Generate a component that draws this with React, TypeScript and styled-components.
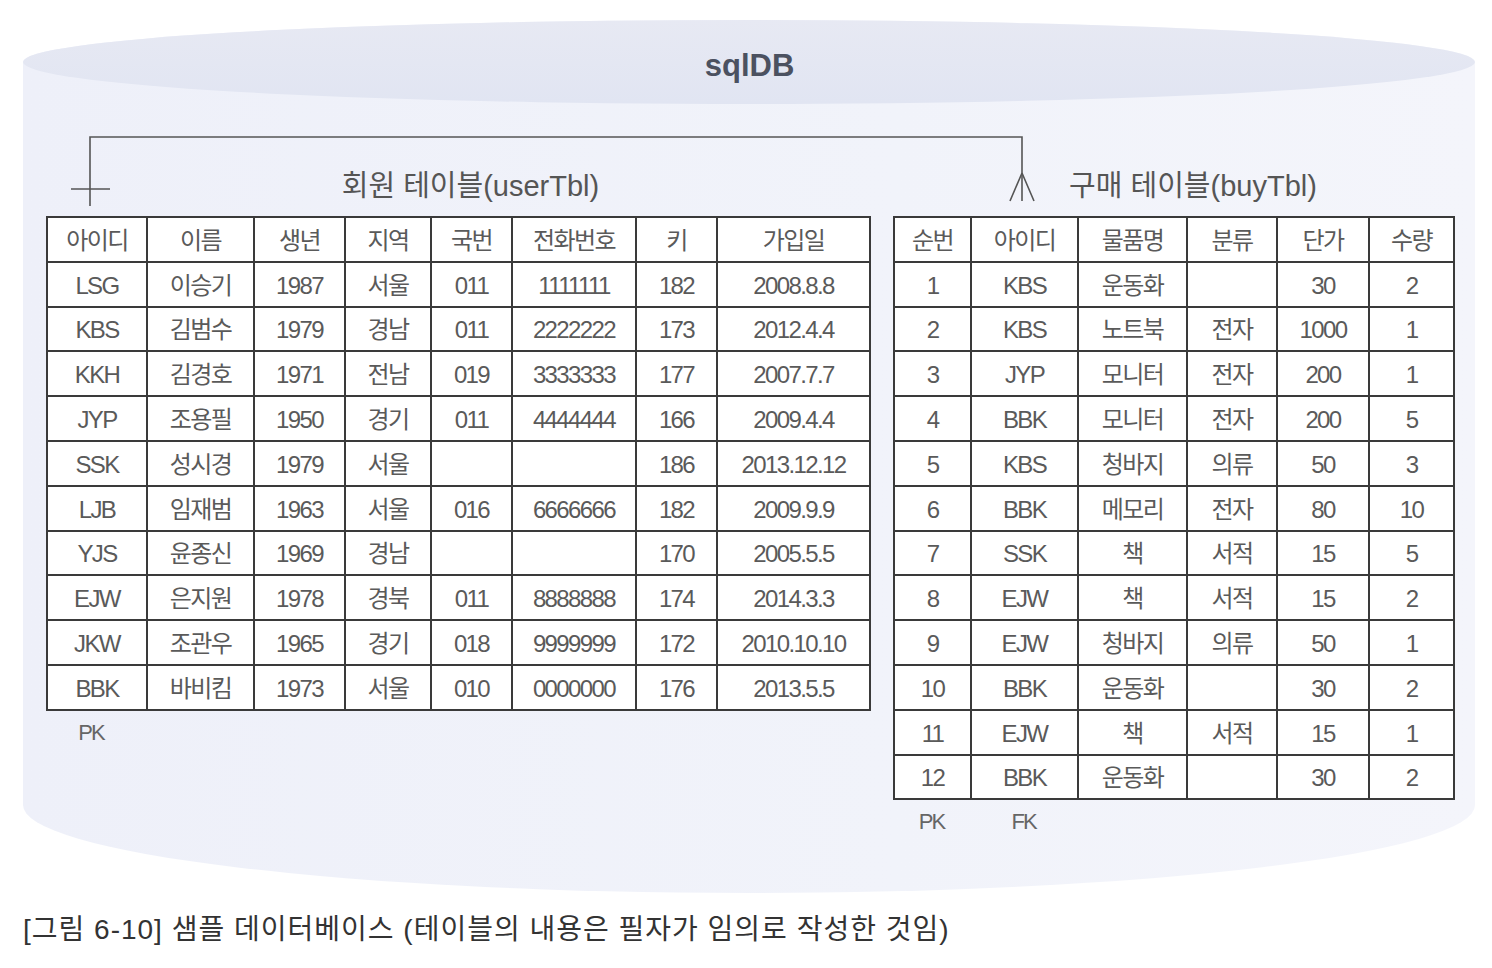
import React from 'react'
import styled, { createGlobalStyle } from 'styled-components'

const GlobalStyle = createGlobalStyle`
  body {
    margin: 0;
    background: #ffffff;
    font-family: 'Liberation Sans', 'Noto Sans CJK KR', sans-serif;
  }
`

const Page = styled.main`
  width: 1492px;
  height: 968px;
  box-sizing: border-box;
  padding: 20px 0 0 23px;
  overflow: hidden;
`

const Cylinder = styled.section`
  position: relative;
  width: 1452px;
  height: 873px;
  box-sizing: border-box;
  padding: 0 22px 0 23px;
  display: flex;
  flex-direction: column;
  background: linear-gradient(90deg, #eef0f9 0%, #f1f3fa 60%, #f4f5fb 100%);
  border-radius: 50% 50% 50% 50% / 42px 42px 88px 88px;

  &::before {
    content: '';
    position: absolute;
    left: 0;
    top: 0;
    width: 100%;
    height: 84px;
    border-radius: 50%;
    background: linear-gradient(180deg, #e7e9f3 0%, #e1e5f2 100%);
  }
`

const DbName = styled.h1`
  position: relative;
  margin: 0;
  height: 92px;
  line-height: 92px;
  text-align: center;
  font-size: 31px;
  font-weight: bold;
  color: #4b5160;
`

const Relation = styled.svg`
  position: absolute;
  left: 0;
  top: 0;
  width: 1452px;
  height: 230px;
  pointer-events: none;
`

const TablesRow = styled.div`
  display: flex;
  gap: 24px;
  margin-top: 54px;
  align-items: flex-start;
`

const TableBlock = styled.div`
  display: flex;
  flex-direction: column;
  width: ${p => p.$w}px;
`

const TableTitle = styled.h2`
  margin: 0 0 10px;
  height: 40px;
  line-height: 40px;
  padding-left: ${p => p.$shift}px;
  text-align: center;
  font-size: 29px;
  font-weight: normal;
  letter-spacing: 0;
  color: #555;
`

const Grid = styled.table`
  border-collapse: collapse;
  width: 100%;
  table-layout: fixed;
  background: #fff;
  border: 2px solid #3a3a3a;
`

const Col = styled.col`
  width: ${p => p.$w}px;
`

const Row = styled.tr`
  height: 44.8px;
`

const Cell = styled.td`
  border: 2px solid #3a3a3a;
  padding: 3px 0 0;
  text-align: center;
  vertical-align: middle;
  font-size: 24px;
  line-height: 1;
  letter-spacing: -1.6px;
  color: #5a5a5a;
  white-space: nowrap;
`

const KeyRow = styled.div`
  display: flex;
  height: 44px;
`

const KeyLabel = styled.span`
  width: ${p => p.$w}px;
  line-height: 44px;
  text-align: center;
  font-size: 22px;
  letter-spacing: -2px;
  color: #666;
`

const Caption = styled.p`
  margin: 17px 0 0;
  line-height: 40px;
  font-size: 28px;
  letter-spacing: 1px;
  color: #333;
`

const userCols = [100, 107, 91, 86, 81, 124, 81, 153]
const userHead = ['아이디', '이름', '생년', '지역', '국번', '전화번호', '키', '가입일']
const users = [
  ['LSG', '이승기', '1987', '서울', '011', '1111111', '182', '2008.8.8'],
  ['KBS', '김범수', '1979', '경남', '011', '2222222', '173', '2012.4.4'],
  ['KKH', '김경호', '1971', '전남', '019', '3333333', '177', '2007.7.7'],
  ['JYP', '조용필', '1950', '경기', '011', '4444444', '166', '2009.4.4'],
  ['SSK', '성시경', '1979', '서울', '', '', '186', '2013.12.12'],
  ['LJB', '임재범', '1963', '서울', '016', '6666666', '182', '2009.9.9'],
  ['YJS', '윤종신', '1969', '경남', '', '', '170', '2005.5.5'],
  ['EJW', '은지원', '1978', '경북', '011', '8888888', '174', '2014.3.3'],
  ['JKW', '조관우', '1965', '경기', '018', '9999999', '172', '2010.10.10'],
  ['BBK', '바비킴', '1973', '서울', '010', '0000000', '176', '2013.5.5'],
]

const buyCols = [77, 107, 109, 90, 92, 85]
const buyHead = ['순번', '아이디', '물품명', '분류', '단가', '수량']
const buys = [
  ['1', 'KBS', '운동화', '', '30', '2'],
  ['2', 'KBS', '노트북', '전자', '1000', '1'],
  ['3', 'JYP', '모니터', '전자', '200', '1'],
  ['4', 'BBK', '모니터', '전자', '200', '5'],
  ['5', 'KBS', '청바지', '의류', '50', '3'],
  ['6', 'BBK', '메모리', '전자', '80', '10'],
  ['7', 'SSK', '책', '서적', '15', '5'],
  ['8', 'EJW', '책', '서적', '15', '2'],
  ['9', 'EJW', '청바지', '의류', '50', '1'],
  ['10', 'BBK', '운동화', '', '30', '2'],
  ['11', 'EJW', '책', '서적', '15', '1'],
  ['12', 'BBK', '운동화', '', '30', '2'],
]

function DataTable({ cols, head, rows }: { cols: number[]; head: string[]; rows: string[][] }) {
  return (
    <Grid>
      <colgroup>
        {cols.map((w, i) => <Col key={i} $w={w} />)}
      </colgroup>
      <tbody>
        <Row>
          {head.map(h => <Cell key={h}>{h}</Cell>)}
        </Row>
        {rows.map((r, i) => (
          <Row key={i}>
            {r.map((c, j) => <Cell key={j}>{c}</Cell>)}
          </Row>
        ))}
      </tbody>
    </Grid>
  )
}

export default function App() {
  return (
    <Page>
      <GlobalStyle />
      <Cylinder>
        <DbName>sqlDB</DbName>
        <Relation viewBox="0 0 1452 230">
          <g stroke="#555" strokeWidth="1.6" fill="none">
            <path d="M67 186 V117 H999 V181" />
            <path d="M48 169 H87" />
            <path d="M999 153 L987 181 M999 153 L1011 181" />
          </g>
        </Relation>
        <TablesRow>
          <TableBlock $w={823}>
            <TableTitle $shift={26}>회원 테이블(userTbl)</TableTitle>
            <DataTable cols={userCols} head={userHead} rows={users} />
            <KeyRow>
              <KeyLabel $w={90}>PK</KeyLabel>
            </KeyRow>
          </TableBlock>
          <TableBlock $w={560}>
            <TableTitle $shift={40}>구매 테이블(buyTbl)</TableTitle>
            <DataTable cols={buyCols} head={buyHead} rows={buys} />
            <KeyRow>
              <KeyLabel $w={77}>PK</KeyLabel>
              <KeyLabel $w={107}>FK</KeyLabel>
            </KeyRow>
          </TableBlock>
        </TablesRow>
      </Cylinder>
      <Caption>[그림 6-10] 샘플 데이터베이스 (테이블의 내용은 필자가 임의로 작성한 것임)</Caption>
    </Page>
  )
}
